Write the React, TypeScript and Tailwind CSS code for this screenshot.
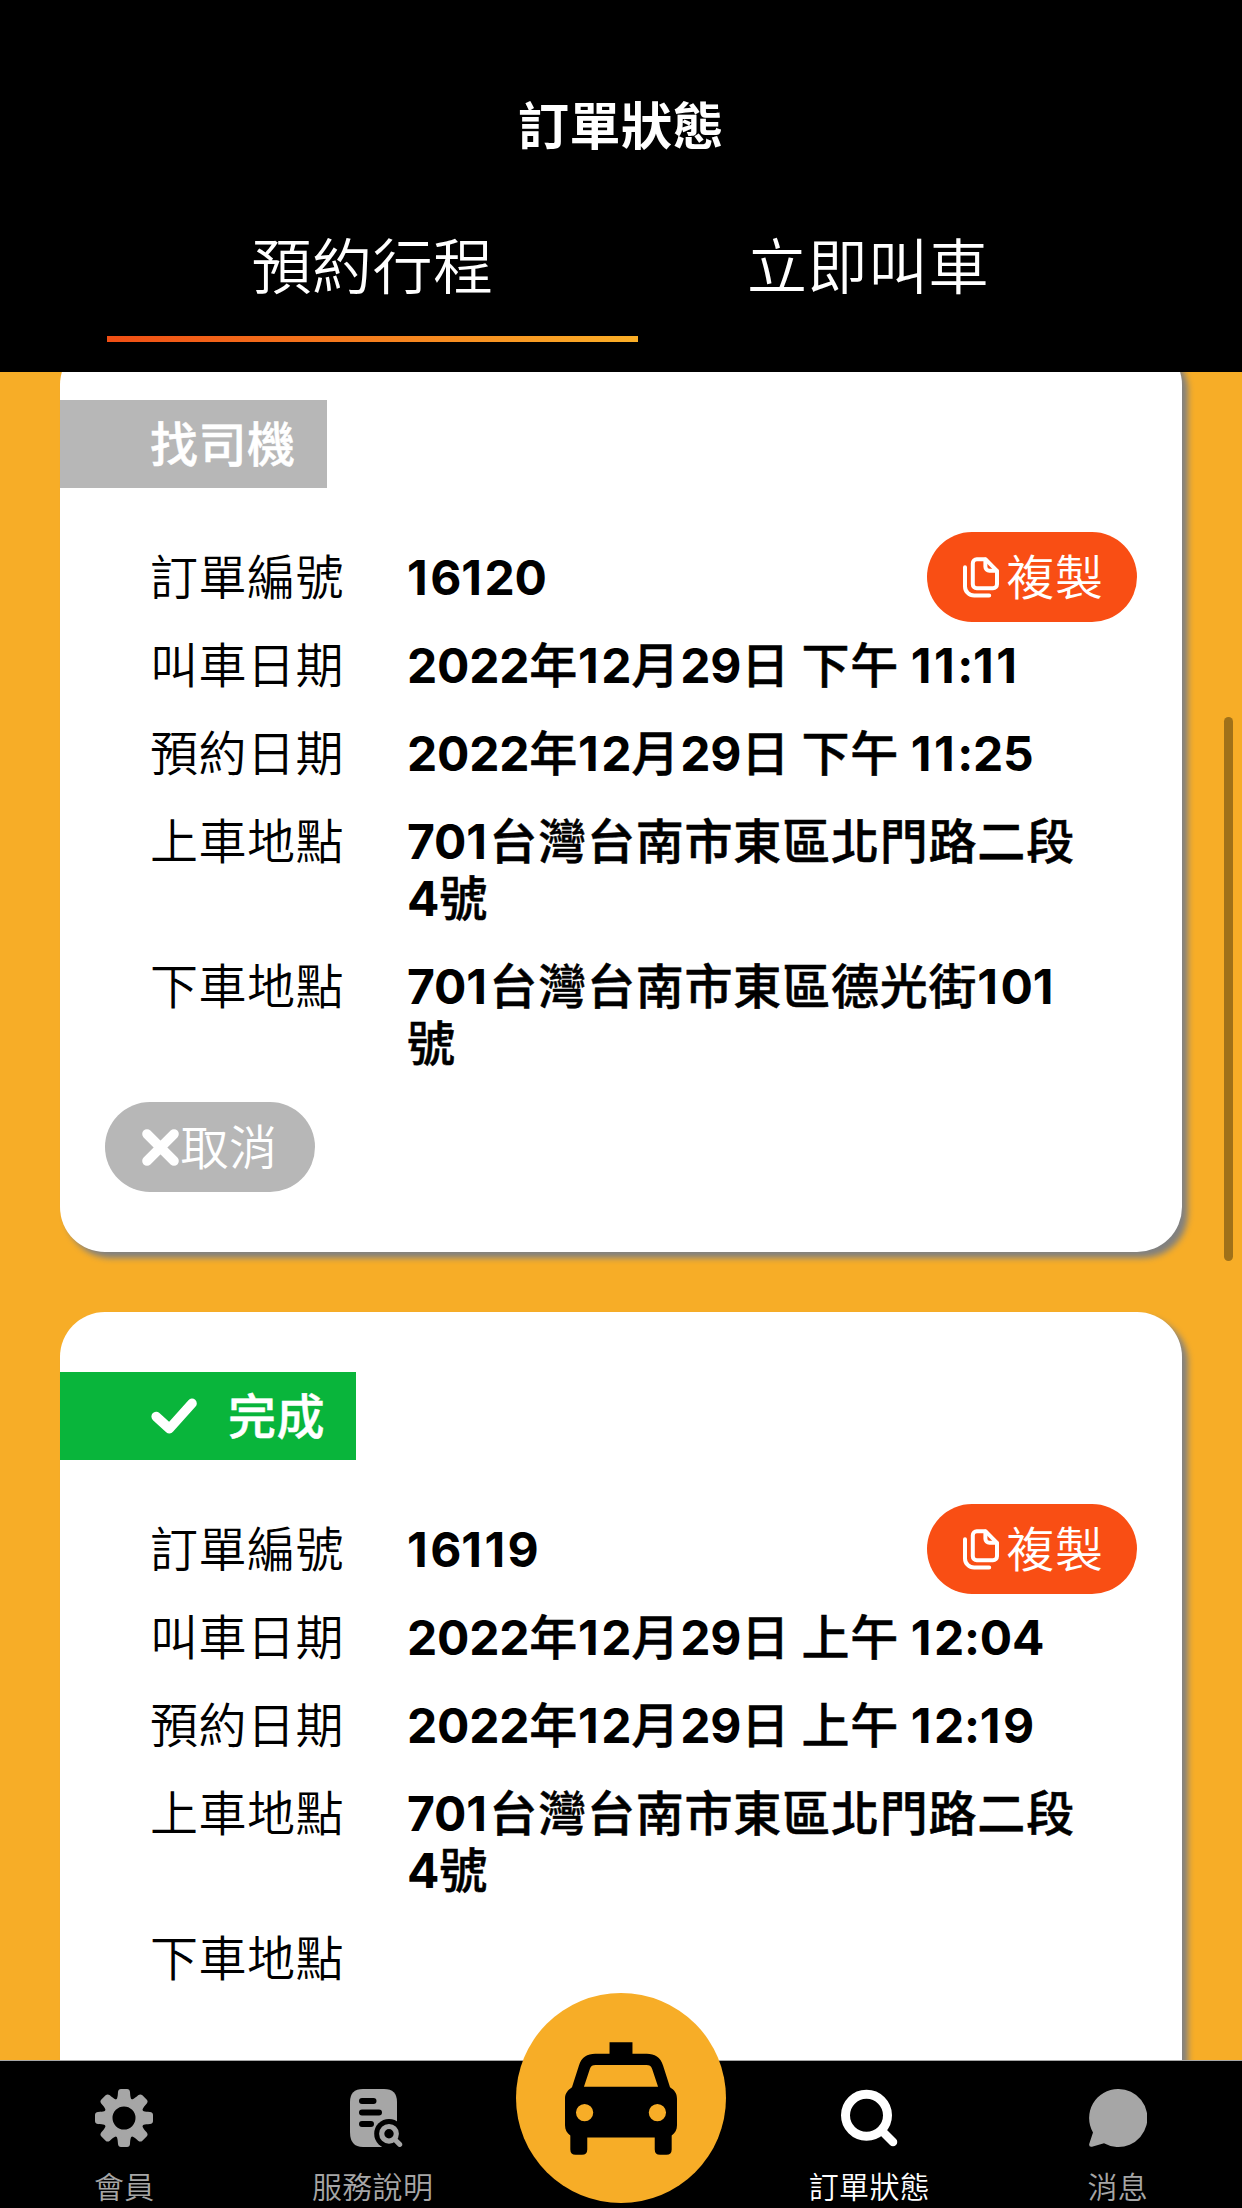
import React from 'react';

interface Order {
    id: string;
    status: 'searching' | 'done';
    calledAt: string;
    bookedAt: string;
    pickup: string;
    dropoff: string;
}

const ORDERS: Order[] = [
    {
        id: '16120',
        status: 'searching',
        calledAt: '2022年12月29日 下午 11:11',
        bookedAt: '2022年12月29日 下午 11:25',
        pickup: '701台灣台南市東區北門路二段4號',
        dropoff: '701台灣台南市東區德光街101號',
    },
    {
        id: '16119',
        status: 'done',
        calledAt: '2022年12月29日 上午 12:04',
        bookedAt: '2022年12月29日 上午 12:19',
        pickup: '701台灣台南市東區北門路二段4號',
        dropoff: '',
    },
];

const CopyIcon = () => (
    <svg viewBox="0 0 36 41" className="w-9 h-[41px] shrink-0" fill="none" stroke="currentColor" strokeWidth="4" strokeLinecap="round" strokeLinejoin="round">
        <path d="M13.8 2.2h8.6L34 13.8v13.4a4 4 0 0 1-4 4H13.8a4 4 0 0 1-4-4v-21a4 4 0 0 1 4-4z" />
        <path d="M22.4 2.6v7.2a4 4 0 0 0 4 4h7.2" />
        <path d="M2 10.2v19.2a9.200 9.200 0 0 0 9.200 9.200h15" />
    </svg>
);

const CrossIcon = () => (
    <svg viewBox="0 0 37 37" className="w-[37px] h-[37px] shrink-0" fill="none" stroke="currentColor" strokeWidth="9.6" strokeLinecap="round">
        <path d="M5 5l27 27M32 5l-27 27" />
    </svg>
);

const CheckIcon = () => (
    <svg viewBox="0 0 46 36" className="w-[46px] h-9 shrink-0" fill="none" stroke="currentColor" strokeWidth="9.6" strokeLinecap="round" strokeLinejoin="round">
        <path d="M5.2 18.6L18.400 30.600L41 5.400" />
    </svg>
);

const GearIcon = () => (
    <svg viewBox="-29 -29 58 58" className="w-[58px] h-[58px]" fill="currentColor">
        {[0, 45, 90, 135, 180, 225, 270, 315].map((angle) => (
            <path
                key={angle}
                transform={`rotate(${angle})`}
                d="M-9 -17C-7 -18.500 -6.300 -20 -6 -26Q-5.700 -29 -3 -29H3Q5.700 -29 6 -26C6.300 -20 7 -18.500 9 -17z"
            />
        ))}
        <path fillRule="evenodd" d="M0 -20a20 20 0 1 1 0 40a20 20 0 1 1 0 -40zM0 -11.500a11.500 11.500 0 1 0 0 23a11.500 11.500 0 1 0 0 -23z" />
    </svg>
);

const GuideIcon = () => (
    <svg viewBox="0 0 53 58" className="w-[53px] h-[58px] ml-[7px]">
        <path fill="currentColor" d="M13 0h21q13 0 13 13v30q0 15-13 15H13Q0 58 0 43V13Q0 0 13 0z" />
        <path d="M12 12h11.500M12 23.500h17M12 35h9" stroke="black" strokeWidth="6" strokeLinecap="round" />
        <circle cx="39" cy="44.800" r="14.800" fill="black" />
        <circle cx="39" cy="44.800" r="7.300" fill="none" stroke="currentColor" strokeWidth="5.200" />
        <path d="M44.500 50.300L49.700 55.400" stroke="currentColor" strokeWidth="5" strokeLinecap="round" />
    </svg>
);

const SearchIcon = () => (
    <svg viewBox="0 0 58 58" className="w-[58px] h-[58px]" fill="none" stroke="currentColor" strokeLinecap="round">
        <circle cx="26.500" cy="26.300" r="21" strokeWidth="9" />
        <path d="M42.500 42.500L53 53" strokeWidth="8.500" />
    </svg>
);

const ChatIcon = () => (
    <svg viewBox="0 0 58 58" className="w-[58px] h-[58px]" fill="currentColor">
        <path d="M29 0a29 29 0 1 1-14 54.200L3 57.700Q-.300 58.300 .200 55L4 43.500A29 29 0 0 1 29 0z" />
    </svg>
);

const TaxiIcon = () => (
    <svg viewBox="0 0 337 339" className="w-28 h-[113px]">
        <path
            fill="black"
            fillRule="evenodd"
            d="M134 0h69v35h43c24 0 41 10 49 35l21 66c14 9 21 19 21 34v80c0 14-6 24-16 31v42q0 16-16 16h-19q-16 0-16-16v-36H67v36q0 16-16 16H32q-16 0-16-16v-42C6 274 0 264 0 250v-80c0-15 8-25 21-34l21-66c8-25 25-35 49-35h43zM92 69c-9 0-14 3-17 11L57 134h223l-18-54c-3-8-8-11-17-11zM59 186a26 26 0 1 0 0 52a26 26 0 1 0 0-52zM278 186a26 26 0 1 0 0 52a26 26 0 1 0 0-52z"
        />
    </svg>
);

// Digits are set bolder than the Chinese text, and the narrow 1 gets more room
const renderValue = (value: string) =>
    value.split(/(1+|[02-9:]+)/).filter(Boolean).map((part, index) => {
        if (part[0] === '1') {
            return <span key={index} className="font-bold tracking-[2.5px]">{part}</span>;
        }
        if (/^[\d:]/.test(part)) {
            return <span key={index} className="font-bold tracking-[-0.2px]">{part}</span>;
        }
        return <span key={index} className="[-webkit-text-stroke:0.5px_black]">{part}</span>;
    });

interface RowProps {
    label: string;
    value: string;
    children?: React.ReactNode;
}

const Row: React.FC<RowProps> = ({ label, value, children }) => (
    <div className="flex items-start pl-[90px] pr-[45px]">
        <div className="w-[257px] shrink-0 font-[350]">{label}</div>
        <div className="w-[685px] shrink-0 font-medium tracking-[0.8px] [word-spacing:-2px] break-all">{renderValue(value)}</div>
        {children}
    </div>
);

const OrderCard: React.FC<{ order: Order }> = ({ order }) => (
    <section className="flex flex-col items-start shrink-0 min-h-[800px] bg-white rounded-[45px] py-[60px] shadow-[6px_6px_6px_#808080]">
        {order.status === 'searching' ? (
            <div className="flex items-center h-[88px] w-[267px] pl-[90px] bg-[#b7b7b7] text-white font-medium [-webkit-text-stroke:0.5px_white]">找司機</div>
        ) : (
            <div className="flex items-center gap-[31px] h-[88px] w-[296px] pl-[91px] bg-[#09b53b] text-white font-medium [-webkit-text-stroke:0.5px_white]">
                <CheckIcon />
                完成
            </div>
        )}
        <div className="flex flex-col gap-[31px] w-full mt-[61px]">
            <Row label="訂單編號" value={order.id}>
                <button className="flex items-center justify-center gap-[7px] w-[210px] h-[90px] pl-[3px] shrink-0 -ml-[165px] -mt-[17px] -mb-4 rounded-full bg-[#f94e14] text-white font-[350]">
                    <CopyIcon />
                    複製
                </button>
            </Row>
            <Row label="叫車日期" value={order.calledAt} />
            <Row label="預約日期" value={order.bookedAt} />
            <Row label="上車地點" value={order.pickup} />
            <Row label="下車地點" value={order.dropoff} />
        </div>
        {order.status === 'searching' && (
            <button className="flex items-center justify-center gap-px w-[210px] h-[90px] ml-[45px] mt-[30px] rounded-full bg-[#b7b7b7] text-white font-[350]">
                <CrossIcon />
                取消
            </button>
        )}
    </section>
);

interface TabProps {
    label: string;
    icon: React.ReactNode;
    active?: boolean;
}

const Tab: React.FC<TabProps> = ({ label, icon, active }) => (
    <button className={`flex flex-col items-center flex-1 pt-7 ${active ? 'text-white' : 'text-[#a6a6a6]'}`}>
        {icon}
        <span className="mt-[22px] text-[30px] leading-9 tracking-[0.3px] font-[350]">{label}</span>
    </button>
);

export default function App() {
    return (
        <div className="relative flex flex-col w-[1242px] h-[2208px] overflow-hidden bg-[#f7ad27] text-black text-[48px] leading-[57px] tracking-[0.5px] font-['Inter','Noto_Sans_CJK_TC',sans-serif]">
            <header className="relative z-10 flex flex-col h-[372px] shrink-0 bg-black text-white">
                <h1 className="mt-[97px] text-center text-[51px] leading-[60px] font-semibold">訂單狀態</h1>
                <nav className="flex mt-[63px] px-[107px] text-[60px] leading-[94px] font-[350]">
                    <button className="w-[531px] h-[122px] border-b-6 border-transparent [border-image:linear-gradient(to_right,#f04e14,#fbaf27)_1] pb-[22px]">預約行程</button>
                    <button className="w-[460px] h-[122px] pb-7">立即叫車</button>
                </nav>
            </header>

            <main className="flex flex-col flex-1 min-h-0 gap-[60px] px-[60px] -mt-8">
                {ORDERS.map((order) => (
                    <OrderCard key={order.id} order={order} />
                ))}
            </main>

            <div className="absolute left-[1224px] top-[717px] w-[9px] h-[544px] rounded-full bg-[#a07119]" />

            <footer className="relative z-10 flex h-[148px] shrink-0 border-t border-[#a7a7a7] bg-black text-white">
                <Tab label="會員" icon={<GearIcon />} />
                <Tab label="服務說明" icon={<GuideIcon />} />
                <div className="flex justify-center flex-1">
                    <button className="flex items-center justify-center w-[210px] h-[210px] shrink-0 -mt-[68px] rounded-full bg-[#f7ad27]">
                        <TaxiIcon />
                    </button>
                </div>
                <Tab label="訂單狀態" icon={<SearchIcon />} active />
                <Tab label="消息" icon={<ChatIcon />} />
            </footer>
        </div>
    );
}
